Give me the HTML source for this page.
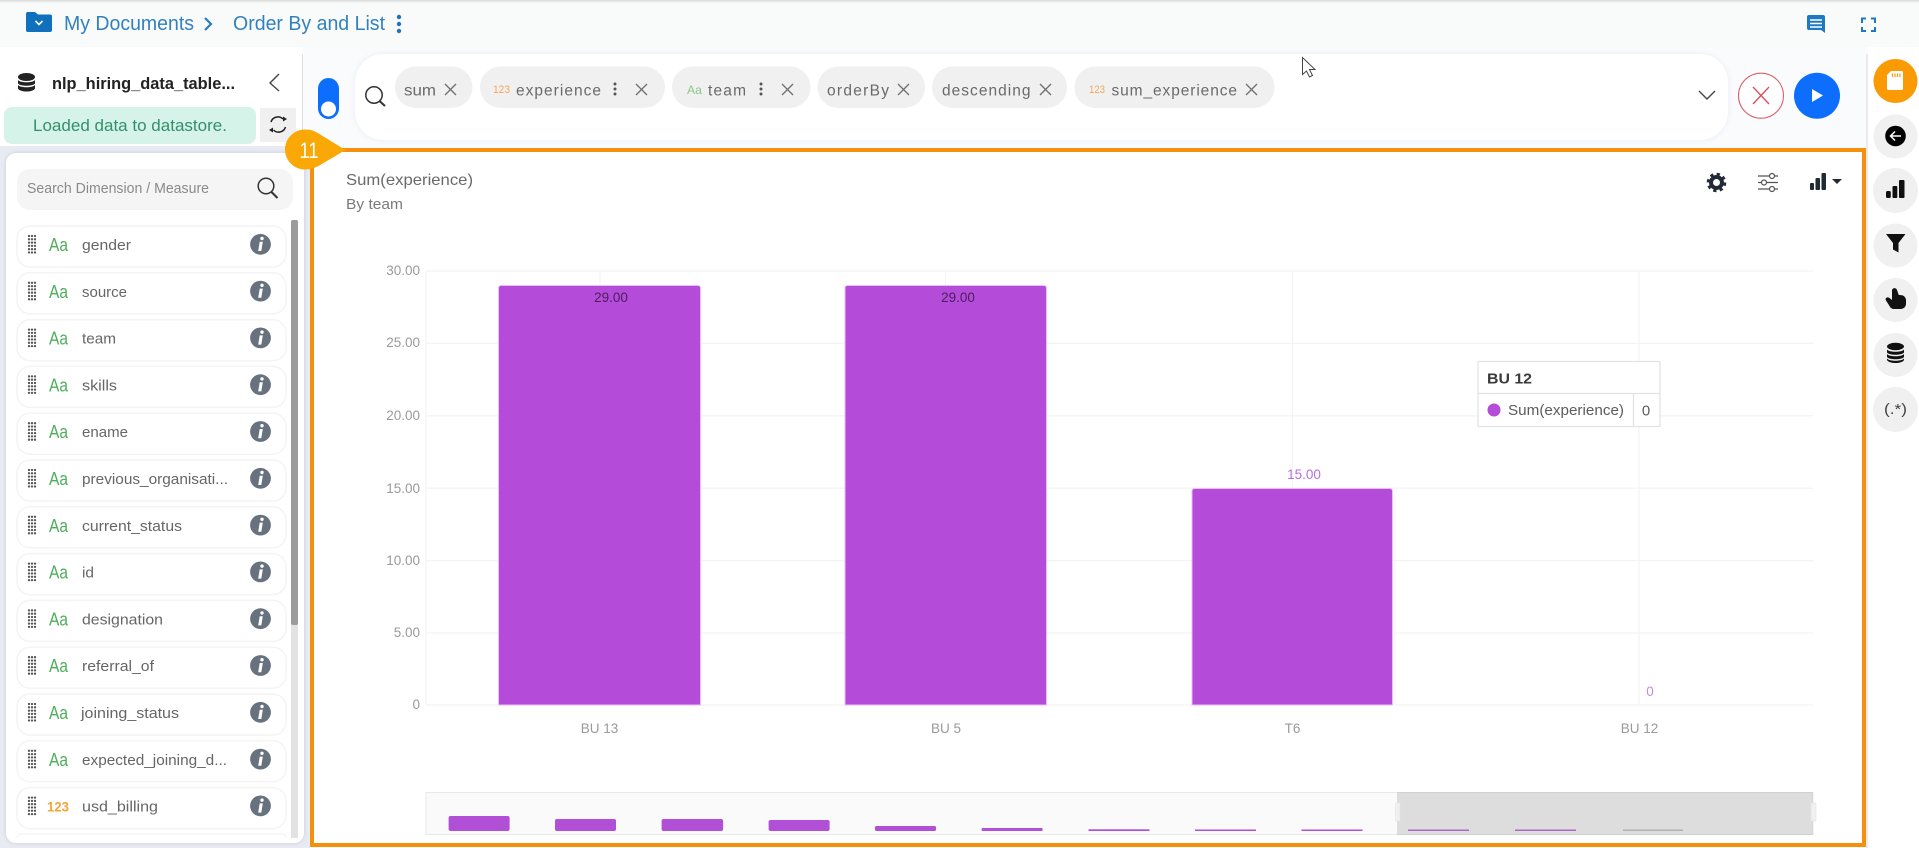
<!DOCTYPE html>
<html lang="en">
<head>
<meta charset="utf-8">
<title>Order By and List</title>
<style>
html,body{margin:0;padding:0;background:#fff;width:1919px;height:848px;overflow:hidden}
svg{display:block;font-family:"Liberation Sans",Arial,sans-serif}
.n{font-size:15.2px;fill:#666}
.aa{font-size:18px;fill:#4fae5c}
.c{font-size:15.5px;fill:#6a6a6a}
.x{stroke:#6f6f6f;stroke-width:1.3;fill:none}
</style>
</head>
<body>
<svg width="1919" height="848" viewBox="0 0 1919 848" xmlns="http://www.w3.org/2000/svg">
<defs>
<linearGradient id="tops" x1="0" y1="0" x2="0" y2="1"><stop offset="0" stop-color="#d8d8d8"/><stop offset="1" stop-color="#f9fafa"/></linearGradient>
<filter id="sh" x="-5%" y="-5%" width="110%" height="110%"><feDropShadow dx="0" dy="0" stdDeviation="2" flood-color="#b9bdc9" flood-opacity=".7"/></filter>
<filter id="sh3" x="-2%" y="-10%" width="104%" height="120%"><feDropShadow dx="0" dy="0" stdDeviation="3" flood-color="#e3e8f4" flood-opacity=".9"/></filter>
<g id="row">
  <rect x="17" y="-20.500" width="269" height="41" rx="13" fill="#fff" stroke="#f4f4f4" stroke-width="1.500"/>
  <g fill="#555">
    <circle cx="29" cy="-10.500" r="1.150"/><circle cx="32" cy="-10.500" r="1.150"/><circle cx="35" cy="-10.500" r="1.150"/>
    <circle cx="29" cy="-7.200" r="1.150"/><circle cx="32" cy="-7.200" r="1.150"/><circle cx="35" cy="-7.200" r="1.150"/>
    <circle cx="29" cy="-3.900" r="1.150"/><circle cx="32" cy="-3.900" r="1.150"/><circle cx="35" cy="-3.900" r="1.150"/>
    <circle cx="29" cy="-.6" r="1.150"/><circle cx="32" cy="-.6" r="1.150"/><circle cx="35" cy="-.6" r="1.150"/>
    <circle cx="29" cy="2.700" r="1.150"/><circle cx="32" cy="2.700" r="1.150"/><circle cx="35" cy="2.700" r="1.150"/>
    <circle cx="29" cy="6" r="1.150"/><circle cx="32" cy="6" r="1.150"/><circle cx="35" cy="6" r="1.150"/>
  </g>
  <circle cx="260.500" cy="-2.200" r="10.400" fill="#67727e"/>
  <path d="M259.700-4.700h3.100l-1.500 9.200h-3.100z" fill="#fff"/>
  <circle cx="262" cy="-8" r="1.700" fill="#fff"/>
</g>
</defs>

<!-- page backgrounds -->
<rect width="1919" height="848" fill="#fff"/>
<rect width="1919" height="47" fill="#f9fafa"/>
<rect width="1919" height="3" fill="url(#tops)"/>
<rect x="303" y="47" width="1565" height="101" fill="#fafbfd"/>
<rect x="0" y="146" width="310" height="702" fill="#e9ebf3"/>
<rect x="302" y="54" width="1" height="92" fill="#dedede"/>
<rect x="1866" y="54" width="2" height="794" fill="#e8eaef"/>

<!-- breadcrumb -->
<path d="M28 12h7l3 2.500h12a2 2 0 0 1 2 2V30a2 2 0 0 1-2 2H28a2 2 0 0 1-2-2V14a2 2 0 0 1 2-2z" fill="#0f70bd"/>
<path d="M35.500 21l3.500 3.500 3.500-3.500" fill="none" stroke="#fff" stroke-width="1.600"/>
<text x="64" y="30" font-size="20" fill="#3181bf" textLength="130" lengthAdjust="spacingAndGlyphs">My Documents</text>
<path d="M205 18l6 6-6 6" fill="none" stroke="#2b7dbd" stroke-width="2.200"/>
<text x="233" y="30" font-size="20" fill="#3181bf" textLength="152" lengthAdjust="spacingAndGlyphs">Order By and List</text>
<g fill="#1d74bb"><circle cx="399" cy="17" r="2.200"/><circle cx="399" cy="24" r="2.200"/><circle cx="399" cy="31" r="2.200"/></g>

<!-- top right icons -->
<path d="M1809 15h14a2 2 0 0 1 2 2v16l-4-3h-12a2 2 0 0 1-2-2V17a2 2 0 0 1 2-2z" fill="#1e78c2"/>
<path d="M1810 20h12M1810 23.500h12M1810 27h12" stroke="#fff" stroke-width="1.500"/>
<path d="M1862 23v-4.500h4M1871 18.500h4v4.500M1875 27v4h-4M1866 31h-4v-4" fill="none" stroke="#1e78c2" stroke-width="2"/>

<!-- dataset header -->
<g fill="#222"><ellipse cx="26.500" cy="77" rx="8.500" ry="4"/>
<path d="M18 80c2 3 15 3 17 0v3.500c-2 3-15 3-17 0zM18 85c2 3 15 3 17 0v3.500c-2 4-15 4-17 0z"/></g>
<text x="52" y="89" font-size="16.500" font-weight="700" fill="#222" textLength="183" lengthAdjust="spacingAndGlyphs">nlp_hiring_data_table...</text>
<path d="M279 74l-9 9 9 8" fill="none" stroke="#444" stroke-width="1.400"/>
<rect x="4" y="107" width="252" height="37" rx="8" fill="#d5f3e8"/>
<text x="33" y="131" font-size="16.500" fill="#358f6e" textLength="194" lengthAdjust="spacingAndGlyphs">Loaded data to datastore.</text>
<rect x="260" y="108" width="36" height="34" fill="#f0f0f0"/>
<path d="M271 122a7.200 7.200 0 0 1 12-3M285.500 127a7.200 7.200 0 0 1-12 3" fill="none" stroke="#222" stroke-width="1.500"/>
<path d="M283 116.500v5l4-2.500zM273 132.500v-5l-4 2.500z" fill="#222"/>

<!-- left list panel -->
<rect x="6" y="153" width="298" height="690" rx="10" fill="#fff" filter="url(#sh)"/>
<rect x="17" y="169" width="276" height="41" rx="13" fill="#f5f5f5"/>
<text x="27" y="193" font-size="14.500" fill="#8a8a8a" textLength="182" lengthAdjust="spacingAndGlyphs">Search Dimension / Measure</text>
<circle cx="266" cy="186" r="7.800" fill="none" stroke="#333" stroke-width="1.500"/>
<path d="M271.500 192l6 6" stroke="#333" stroke-width="2"/>
<rect x="291" y="220" width="7" height="618" fill="#e2e2e2"/>
<rect x="291" y="220" width="7" height="405" rx="2" fill="#9c9c9c"/>

<use href="#row" y="246.500"/>
<text class="aa" x="49" y="251" textLength="19" lengthAdjust="spacingAndGlyphs">Aa</text><text class="n" x="82" y="250" textLength="49" lengthAdjust="spacingAndGlyphs">gender</text>
<use href="#row" y="293.300"/>
<text class="aa" x="49" y="297.800" textLength="19" lengthAdjust="spacingAndGlyphs">Aa</text><text class="n" x="82" y="296.800" textLength="45" lengthAdjust="spacingAndGlyphs">source</text>
<use href="#row" y="340.100"/>
<text class="aa" x="49" y="344.600" textLength="19" lengthAdjust="spacingAndGlyphs">Aa</text><text class="n" x="82" y="343.600" textLength="34" lengthAdjust="spacingAndGlyphs">team</text>
<use href="#row" y="386.900"/>
<text class="aa" x="49" y="391.400" textLength="19" lengthAdjust="spacingAndGlyphs">Aa</text><text class="n" x="82" y="390.400" textLength="35" lengthAdjust="spacingAndGlyphs">skills</text>
<use href="#row" y="433.700"/>
<text class="aa" x="49" y="438.200" textLength="19" lengthAdjust="spacingAndGlyphs">Aa</text><text class="n" x="82" y="437.200" textLength="46" lengthAdjust="spacingAndGlyphs">ename</text>
<use href="#row" y="480.500"/>
<text class="aa" x="49" y="485" textLength="19" lengthAdjust="spacingAndGlyphs">Aa</text><text class="n" x="82" y="484" textLength="146" lengthAdjust="spacingAndGlyphs">previous_organisati...</text>
<use href="#row" y="527.300"/>
<text class="aa" x="49" y="531.800" textLength="19" lengthAdjust="spacingAndGlyphs">Aa</text><text class="n" x="82" y="530.800" textLength="100" lengthAdjust="spacingAndGlyphs">current_status</text>
<use href="#row" y="574.100"/>
<text class="aa" x="49" y="578.600" textLength="19" lengthAdjust="spacingAndGlyphs">Aa</text><text class="n" x="82" y="577.600" textLength="12" lengthAdjust="spacingAndGlyphs">id</text>
<use href="#row" y="620.900"/>
<text class="aa" x="49" y="625.400" textLength="19" lengthAdjust="spacingAndGlyphs">Aa</text><text class="n" x="82" y="624.400" textLength="81" lengthAdjust="spacingAndGlyphs">designation</text>
<use href="#row" y="667.700"/>
<text class="aa" x="49" y="672.200" textLength="19" lengthAdjust="spacingAndGlyphs">Aa</text><text class="n" x="82" y="671.200" textLength="72" lengthAdjust="spacingAndGlyphs">referral_of</text>
<use href="#row" y="714.500"/>
<text class="aa" x="49" y="719" textLength="19" lengthAdjust="spacingAndGlyphs">Aa</text><text class="n" x="81" y="718" textLength="98" lengthAdjust="spacingAndGlyphs">joining_status</text>
<use href="#row" y="761.300"/>
<text class="aa" x="49" y="765.800" textLength="19" lengthAdjust="spacingAndGlyphs">Aa</text><text class="n" x="82" y="764.800" textLength="145" lengthAdjust="spacingAndGlyphs">expected_joining_d...</text>
<use href="#row" y="808.100"/>
<text x="47" y="811.600" font-size="14" font-weight="700" fill="#f5a43a" textLength="22" lengthAdjust="spacingAndGlyphs">123</text><text class="n" x="82" y="811.600" textLength="76" lengthAdjust="spacingAndGlyphs">usd_billing</text>
<path d="M17 842v-4a4 4 0 0 1 4-4h261a4 4 0 0 1 4 4v4z" fill="#fff"/>
<path d="M17 838a4 4 0 0 1 4-4h261a4 4 0 0 1 4 4" fill="none" stroke="#f0f0f0"/>

<!-- query bar -->
<rect x="318" y="78" width="21" height="41" rx="10.500" fill="#0d6efd"/>
<circle cx="328.500" cy="109" r="7.500" fill="#fff"/>
<rect x="355" y="54" width="1373" height="86" rx="28" fill="#fff" filter="url(#sh3)"/>
<circle cx="374" cy="95" r="8.200" fill="none" stroke="#333" stroke-width="1.500"/>
<path d="M379.500 101l5.500 5" stroke="#333" stroke-width="2"/>

<rect x="395" y="66.500" width="77.500" height="41.500" rx="20.700" fill="#f0f0f0"/>
<text class="c" x="404" y="95.500" textLength="32" lengthAdjust="spacingAndGlyphs">sum</text>
<path class="x" d="M445 84l11 11M456 84l-11 11"/>

<rect x="480" y="66.500" width="185" height="41.500" rx="20.700" fill="#f0f0f0"/>
<text x="493" y="93" font-size="11" fill="#f7a65a" textLength="17" lengthAdjust="spacingAndGlyphs">123</text>
<text class="c" x="516" y="95.500" textLength="85" lengthAdjust="spacing">experience</text>
<g fill="#555"><circle cx="615" cy="84" r="1.500"/><circle cx="615" cy="89" r="1.500"/><circle cx="615" cy="94" r="1.500"/></g>
<path class="x" d="M636 84l11 11M647 84l-11 11"/>

<rect x="672" y="66.500" width="138.500" height="41.500" rx="20.700" fill="#f0f0f0"/>
<text x="687" y="94" font-size="12" fill="#8cc68c" textLength="15" lengthAdjust="spacingAndGlyphs">Aa</text>
<text class="c" x="708" y="95.500" textLength="38" lengthAdjust="spacing">team</text>
<g fill="#555"><circle cx="761" cy="84" r="1.500"/><circle cx="761" cy="89" r="1.500"/><circle cx="761" cy="94" r="1.500"/></g>
<path class="x" d="M782 84l11 11M793 84l-11 11"/>

<rect x="817.500" y="66.500" width="107.500" height="41.500" rx="20.700" fill="#f0f0f0"/>
<text class="c" x="827" y="95.500" textLength="62" lengthAdjust="spacing">orderBy</text>
<path class="x" d="M898 84l11 11M909 84l-11 11"/>

<rect x="932" y="66.500" width="135" height="41.500" rx="20.700" fill="#f0f0f0"/>
<text class="c" x="942" y="95.500" textLength="88.500" lengthAdjust="spacing">descending</text>
<path class="x" d="M1040 84l11 11M1051 84l-11 11"/>

<rect x="1074.500" y="66.500" width="200" height="41.500" rx="20.700" fill="#f0f0f0"/>
<text x="1089" y="93" font-size="11" fill="#f7a65a" textLength="16" lengthAdjust="spacingAndGlyphs">123</text>
<text class="c" x="1111.500" y="95.500" textLength="125.500" lengthAdjust="spacing">sum_experience</text>
<path class="x" d="M1246 84l11 11M1257 84l-11 11"/>

<!-- cursor -->
<path d="M1302.500 57.500v17l4-3.500 3 6 3-1.500-3-6h5.500z" fill="#fff" stroke="#444" stroke-width="1"/>
<path d="M1699 91l8 8 8-8" fill="none" stroke="#444" stroke-width="1.400"/>
<circle cx="1761" cy="95.700" r="22.500" fill="#fff" stroke="#d9626b" stroke-width="1.100"/>
<path d="M1753 87l16 17M1769 87l-16 17" stroke="#d9505a" stroke-width="1.300"/>
<circle cx="1817" cy="95.700" r="23" fill="#0d6efd"/>
<path d="M1812 89l11 6.500-11 6.500z" fill="#fff"/>

<!-- chart card -->
<rect x="312" y="150" width="1552" height="695" fill="#fff" stroke="#f5900f" stroke-width="4"/>
<text x="346" y="185" font-size="16" fill="#6a6a6a" textLength="127" lengthAdjust="spacingAndGlyphs">Sum(experience)</text>
<text x="346" y="209" font-size="15" fill="#7a7a7a" textLength="57" lengthAdjust="spacingAndGlyphs">By team</text>

<!-- chart tools -->
<circle cx="1716.500" cy="182.500" r="5.500" fill="none" stroke="#222b35" stroke-width="4"/>
<circle cx="1716.500" cy="182.500" r="8.300" fill="none" stroke="#222b35" stroke-width="3" stroke-dasharray="3.200 3.300"/>
<g stroke="#555" stroke-width="1.200" fill="#fff"><path d="M1758 176h20M1758 182.500h20M1758 189h20"/><circle cx="1772" cy="176" r="2.500"/><circle cx="1764" cy="182.500" r="2.500"/><circle cx="1772" cy="189" r="2.500"/></g>
<g fill="#222b35"><rect x="1810" y="183" width="4" height="7" rx="1"/><rect x="1815.500" y="178" width="4.500" height="12" rx="1"/><rect x="1821.500" y="173" width="4.500" height="17" rx="1"/><path d="M1832 179h10l-5 5z"/></g>

<!-- grid -->
<g stroke="#f4f4f4" stroke-width="1.200">
<path d="M426 271H1813M426 343.400H1813M426 415.800H1813M426 488.200H1813M426 560.600H1813M426 633H1813M426 705H1813"/>
<path d="M426 271V705M600 271V705M945.500 271V705M1292.500 271V705M1639 271V705"/>
</g>
<g font-size="13.500" fill="#9a9a9a" text-anchor="end">
<text x="420" y="275">30.00</text><text x="420" y="347">25.00</text><text x="420" y="420">20.00</text><text x="420" y="493">15.00</text><text x="420" y="565">10.00</text><text x="420" y="637">5.00</text><text x="420" y="709">0</text>
</g>

<!-- bars -->
<g fill="#b44cd9" stroke="#ebbcff" stroke-width="1">
<path d="M498.500 705V288a2.500 2.500 0 0 1 2.500-2.500H698a2.500 2.500 0 0 1 2.500 2.500V705z"/>
<path d="M845 705V288a2.500 2.500 0 0 1 2.500-2.500H1044a2.500 2.500 0 0 1 2.500 2.500V705z"/>
<path d="M1192 705V491a2.500 2.500 0 0 1 2.500-2.500H1390a2.500 2.500 0 0 1 2.500 2.500V705z"/>
</g>
<text x="611" y="302" font-size="13.500" fill="#4a1f5c" text-anchor="middle">29.00</text>
<text x="958" y="302" font-size="13.500" fill="#4a1f5c" text-anchor="middle">29.00</text>
<text x="1304" y="479" font-size="13.500" fill="#b86fd8" text-anchor="middle">15.00</text>
<text x="1650" y="696" font-size="13.500" fill="#c58be0" text-anchor="middle">0</text>
<g font-size="13.500" fill="#9a9a9a" text-anchor="middle">
<text x="599.500" y="733">BU 13</text><text x="946" y="733">BU 5</text><text x="1292.500" y="733">T6</text><text x="1639.500" y="733">BU 12</text>
</g>

<!-- tooltip -->
<rect x="1478" y="361.500" width="182" height="65" fill="#fff" stroke="#e3e3e3" stroke-width="1.300"/>
<path d="M1478 393.500H1660M1633.500 393.500V426" stroke="#e3e3e3" stroke-width="1.300"/>
<text x="1487" y="383.500" font-size="15" font-weight="700" fill="#3a3a3a" textLength="45" lengthAdjust="spacingAndGlyphs">BU 12</text>
<circle cx="1494" cy="410" r="6.500" fill="#b44cd9"/>
<text x="1508" y="415" font-size="15" fill="#5c5c5c" textLength="116" lengthAdjust="spacingAndGlyphs">Sum(experience)</text>
<text x="1646" y="415.500" font-size="15" fill="#5c5c5c" text-anchor="middle">0</text>

<!-- brush -->
<rect x="426" y="792.500" width="1387" height="42" fill="#fafafb" stroke="#e8e8e8"/>
<g fill="#b14fd6">
<rect x="448.600" y="816" width="61" height="15" rx="2"/>
<rect x="555" y="819" width="61" height="12" rx="2"/>
<rect x="661.600" y="819" width="61.500" height="12" rx="2"/>
<rect x="768.600" y="820" width="61" height="11" rx="2"/>
<rect x="875" y="826" width="61" height="5" rx="1.500"/>
<rect x="981.600" y="828" width="61" height="3" rx="1"/>
<rect x="1088.500" y="829.300" width="61" height="1.700"/>
<rect x="1195" y="829.500" width="61" height="1.500"/>
<rect x="1301.500" y="829.500" width="61" height="1.500"/>
<rect x="1408" y="829.500" width="61" height="1.500"/>
<rect x="1515" y="829.500" width="61" height="1.500"/>
<rect x="1623" y="829.500" width="60" height="1.500" fill="#bbb"/>
</g>
<rect x="1397" y="792" width="416" height="43" fill="#9a9a9c" fill-opacity=".3"/>
<rect x="1395.500" y="803" width="4.500" height="18" fill="#f0f0f0" stroke="#e4e4e4" stroke-width=".6"/>
<rect x="1811" y="803" width="5" height="18" fill="#f0f0f0" stroke="#e4e4e4" stroke-width=".6"/>

<!-- badge -->
<path d="M345.500 150L321 135C315 131 311 129.500 305 129.500C294 129.500 285 138.500 285 149.500C285 160.500 294 169.500 305 169.500C311 169.500 315 168 321 164.500Z" fill="#f9a806"/>
<text x="309" y="158" font-size="22" fill="#fff" text-anchor="middle" textLength="19" lengthAdjust="spacingAndGlyphs">11</text>

<!-- right rail -->
<g fill="#f0f0f0">
<circle cx="1895.500" cy="136.500" r="22"/><circle cx="1895.500" cy="190.500" r="22.500"/><circle cx="1895.500" cy="245.500" r="22"/><circle cx="1895.500" cy="300" r="22"/><circle cx="1895.500" cy="355" r="22"/><circle cx="1895.500" cy="409.500" r="22.500"/>
</g>
<circle cx="1895.500" cy="81" r="22" fill="#fa9a05"/>
<path d="M1891 71h10.500a1.500 1.500 0 0 1 1.500 1.500V88.500a1.500 1.500 0 0 1-1.500 1.500H1888.500a1.500 1.500 0 0 1-1.500-1.500V75z" fill="#fff"/>
<path d="M1892.500 73.500v3.500M1895 73.500v3.500M1897.500 73.500v3.500M1900 73.500v3.500" stroke="#fa9a05" stroke-width="1.200"/>
<circle cx="1895.500" cy="136" r="10.300" fill="#000"/>
<path d="M1901 136h-10M1895 131.500l-4.500 4.500 4.500 4.500" fill="none" stroke="#fff" stroke-width="1.500"/>
<g fill="#111"><rect x="1886" y="191" width="4.800" height="7" rx="1.500"/><rect x="1892.500" y="186" width="4.800" height="12" rx="1"/><rect x="1899" y="180" width="5.500" height="18" rx="1"/></g>
<path d="M1886 234h19.500l-7 9v9.500l-5.500-3v-6.500z" fill="#111"/>
<path d="M1892 290c1-2.500 4-2.500 5 0l1.800 5c3.500-.3 7.200 1 7.200 5.500v3c0 3.500-2.500 5.500-5.500 5.500h-6c-2.500 0-4-1-5-3l-3.500-5.500c-1.500-2.500 1.500-4 3.500-2.500l2.500 2z" fill="#111"/>
<g fill="#111"><ellipse cx="1895.500" cy="346.500" rx="8.500" ry="3.700"/>
<path d="M1887 349.500c2 3 15 3 17 0v3c-2 3-15 3-17 0zM1887 354c2 3 15 3 17 0v3c-2 3-15 3-17 0zM1887 358.500c2 3 15 3 17 0v1.500c-2 4-15 4-17 0z"/></g>
<text x="1895.500" y="414" font-size="15" fill="#444" text-anchor="middle" textLength="23" lengthAdjust="spacingAndGlyphs">(.*)</text>
</svg>
</body>
</html>
